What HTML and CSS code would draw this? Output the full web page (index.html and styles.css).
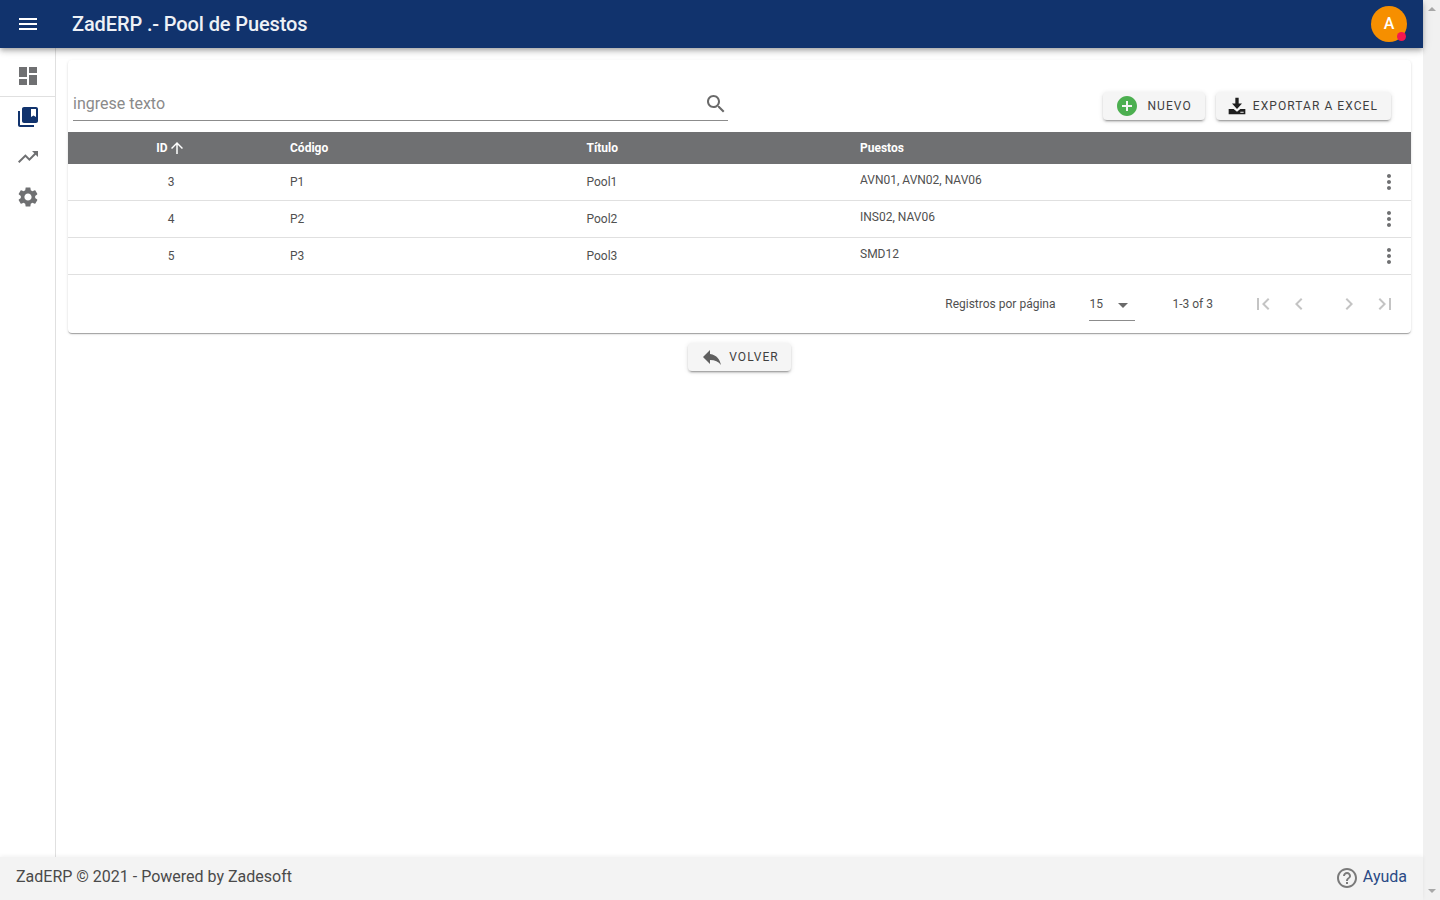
FILE: index.html
```html
<!DOCTYPE html>
<html lang="es">
<head>
    <meta charset="UTF-8">
    <meta name="viewport" content="width=device-width, initial-scale=1.0">
    <title>ZadERP .- Pool de Puestos</title>
    <link rel="stylesheet" href="styles.css">
</head>
<body>
    <div class="page">
        <header class="topbar">
            <button class="menu-btn">
                <svg class="icon" viewBox="0 0 24 24"><path d="M3 18h18v-2H3v2zm0-5h18v-2H3v2zm0-7v2h18V6H3z"/></svg>
            </button>
            <div class="app-title">ZadERP .- Pool de Puestos</div>
            <div class="avatar">A<span class="avatar-dot"></span></div>
        </header>

        <div class="middle">
            <nav class="sidebar">
                <div class="nav-item nav-first">
                    <svg class="icon" viewBox="0 0 24 24"><path d="M3 13h8V3H3v10zm0 8h8v-6H3v6zm10 0h8V11h-8v10zm0-18v6h8V3h-8z"/></svg>
                </div>
                <div class="nav-item active">
                    <svg class="icon" viewBox="0 0 24 24"><path d="M4 6H2v14c0 1.1.9 2 2 2h14v-2H4V6zm16-4H8c-1.1 0-2 .9-2 2v12c0 1.1.9 2 2 2h12c1.1 0 2-.9 2-2V4c0-1.1-.9-2-2-2zm0 10l-2.5-1.5L15 12V4h5v8z"/></svg>
                </div>
                <div class="nav-item">
                    <svg class="icon" viewBox="0 0 24 24"><path d="M16 6l2.29 2.29-4.88 4.88-4-4L2 16.59 3.41 18l6-6 4 4 6.3-6.29L22 12V6z"/></svg>
                </div>
                <div class="nav-item">
                    <svg class="icon" viewBox="0 0 24 24"><path d="M19.14 12.94c.04-.3.06-.61.06-.94 0-.32-.02-.64-.07-.94l2.03-1.58c.18-.14.23-.41.12-.61l-1.92-3.32c-.12-.22-.37-.29-.59-.22l-2.39.96c-.5-.38-1.03-.7-1.62-.94l-.36-2.54c-.04-.24-.24-.41-.48-.41h-3.84c-.24 0-.43.17-.47.41l-.36 2.54c-.59.24-1.13.57-1.62.94l-2.39-.96c-.22-.08-.47 0-.59.22L2.74 8.87c-.12.21-.08.47.12.61l2.03 1.58c-.05.3-.09.63-.09.94s.02.64.07.94l-2.03 1.58c-.18.14-.23.41-.12.61l1.92 3.32c.12.22.37.29.59.22l2.39-.96c.5.38 1.03.7 1.62.94l.36 2.54c.05.24.24.41.48.41h3.84c.24 0 .44-.17.47-.41l.36-2.54c.59-.24 1.13-.56 1.62-.94l2.39.96c.22.08.47 0 .59-.22l1.92-3.32c.12-.22.07-.47-.12-.61l-2.01-1.58zM12 15.6c-1.98 0-3.6-1.62-3.6-3.6s1.62-3.6 3.6-3.6 3.6 1.62 3.6 3.6-1.62 3.6-3.6 3.6z"/></svg>
                </div>
            </nav>

            <main class="content">
                <section class="card">
                    <div class="toolbar">
                        <div class="search">
                            <span class="search-text">ingrese texto</span>
                            <svg class="icon search-icon" viewBox="0 0 24 24"><path d="M15.5 14h-.79l-.28-.27C15.41 12.59 16 11.11 16 9.5 16 5.91 13.09 3 9.5 3S3 5.91 3 9.5 5.91 16 9.5 16c1.61 0 3.09-.59 4.23-1.57l.27.28v.79l5 4.99L20.49 19l-4.99-5zm-6 0C7.01 14 5 11.99 5 9.5S7.01 5 9.5 5 14 7.01 14 9.5 11.99 14 9.5 14z"/></svg>
                        </div>
                        <div class="actions">
                            <button class="btn btn-new">
                                <svg class="icon icon-add" viewBox="0 0 24 24"><path d="M12 2C6.48 2 2 6.48 2 12s4.48 10 10 10 10-4.48 10-10S17.52 2 12 2zm5 11h-4v4h-2v-4H7v-2h4V7h2v4h4v2z"/></svg>
                                NUEVO
                            </button>
                            <button class="btn btn-export">
                                <svg class="icon icon-download" viewBox="0 0 24 24"><path d="M10 2h4v7h4l-6 6.5L6 9h4zM2 15.5h6l4 3.5 4-3.5h6V22H2zM16 19v1h4v-1z" fill-rule="evenodd"/></svg>
                                EXPORTAR A EXCEL
                            </button>
                        </div>
                    </div>

                    <table class="grid">
                        <colgroup>
                            <col class="col-id">
                            <col class="col-code">
                            <col class="col-title">
                            <col class="col-posts">
                            <col class="col-menu">
                        </colgroup>
                        <thead>
                            <tr>
                                <th class="cell-id">ID<svg class="icon sort-icon" viewBox="0 0 24 24"><path d="M4 12l1.41 1.41L11 7.83V20h2V7.83l5.58 5.59L20 12l-8-8-8 8z"/></svg></th>
                                <th>Código</th>
                                <th>Título</th>
                                <th>Puestos</th>
                                <th></th>
                            </tr>
                        </thead>
                        <tbody>
                            <tr>
                                <td class="cell-id">3</td>
                                <td>P1</td>
                                <td>Pool1</td>
                                <td class="cell-posts">AVN01, AVN02, NAV06</td>
                                <td class="cell-menu"><svg class="icon" viewBox="0 0 24 24"><path d="M12 8c1.1 0 2-.9 2-2s-.9-2-2-2-2 .9-2 2 .9 2 2 2zm0 2c-1.1 0-2 .9-2 2s.9 2 2 2 2-.9 2-2-.9-2-2-2zm0 6c-1.1 0-2 .9-2 2s.9 2 2 2 2-.9 2-2-.9-2-2-2z"/></svg></td>
                            </tr>
                            <tr>
                                <td class="cell-id">4</td>
                                <td>P2</td>
                                <td>Pool2</td>
                                <td class="cell-posts">INS02, NAV06</td>
                                <td class="cell-menu"><svg class="icon" viewBox="0 0 24 24"><path d="M12 8c1.1 0 2-.9 2-2s-.9-2-2-2-2 .9-2 2 .9 2 2 2zm0 2c-1.1 0-2 .9-2 2s.9 2 2 2 2-.9 2-2-.9-2-2-2zm0 6c-1.1 0-2 .9-2 2s.9 2 2 2 2-.9 2-2-.9-2-2-2z"/></svg></td>
                            </tr>
                            <tr>
                                <td class="cell-id">5</td>
                                <td>P3</td>
                                <td>Pool3</td>
                                <td class="cell-posts">SMD12</td>
                                <td class="cell-menu"><svg class="icon" viewBox="0 0 24 24"><path d="M12 8c1.1 0 2-.9 2-2s-.9-2-2-2-2 .9-2 2 .9 2 2 2zm0 2c-1.1 0-2 .9-2 2s.9 2 2 2 2-.9 2-2-.9-2-2-2zm0 6c-1.1 0-2 .9-2 2s.9 2 2 2 2-.9 2-2-.9-2-2-2z"/></svg></td>
                            </tr>
                        </tbody>
                    </table>

                    <div class="pager">
                        <span class="pager-label">Registros por página</span>
                        <div class="pager-select"><span>15</span><i class="caret"></i></div>
                        <span class="pager-count">1-3 of 3</span>
                        <div class="pager-nav">
                            <svg class="icon" viewBox="0 0 24 24"><path d="M18.41 16.59L13.82 12l4.59-4.59L17 6l-6 6 6 6zM6 6h2v12H6z"/></svg>
                            <svg class="icon" viewBox="0 0 24 24"><path d="M15.41 7.41L14 6l-6 6 6 6 1.41-1.41L10.83 12z"/></svg>
                            <svg class="icon nav-next" viewBox="0 0 24 24"><path d="M10 6L8.59 7.41 13.17 12l-4.58 4.59L10 18l6-6z"/></svg>
                            <svg class="icon" viewBox="0 0 24 24"><path d="M5.59 7.41L10.18 12l-4.59 4.59L7 18l6-6-6-6zM16 6h2v12h-2z"/></svg>
                        </div>
                    </div>
                </section>

                <div class="back-row">
                    <button class="btn btn-back">
                        <svg class="icon" viewBox="0 0 24 24"><path d="M10 9V5l-7 7 7 7v-4.1c5 0 8.5 1.6 11 5.1-1-5-4-10-11-11z"/></svg>
                        VOLVER
                    </button>
                </div>
            </main>
        </div>

        <footer class="footer">
            <span>ZadERP © 2021 - Powered by Zadesoft</span>
            <a class="help" href="#">
                <svg class="icon" viewBox="0 0 24 24"><path d="M11 18h2v-2h-2v2zm1-16C6.48 2 2 6.48 2 12s4.48 10 10 10 10-4.48 10-10S17.52 2 12 2zm0 18c-4.41 0-8-3.59-8-8s3.59-8 8-8 8 3.59 8 8-3.59 8-8 8zm0-14c-2.21 0-4 1.79-4 4h2c0-1.1.9-2 2-2s2 .9 2 2c0 2-3 1.75-3 5h2c0-2.25 3-2.5 3-5 0-2.21-1.79-4-4-4z"/></svg>
                Ayuda
            </a>
        </footer>
    </div>

    <div class="scrollbar">
        <i class="arrow-up"></i>
        <i class="arrow-down"></i>
    </div>
</body>
</html>
```

FILE: styles.css
```css
:root {
    --primary-color: #11336d;
    --icon-color: #6f7072;
    --line-color: #e0e0e0;
    --text-color: #505050;
}

html, body {
    height: 100%;
}

body {
    margin: 0;
    display: flex;
    overflow: hidden;
    background-color: #fff;
    color: var(--text-color);
    font-family: Roboto, Arial, sans-serif;
}

.icon {
    display: block;
    width: 24px;
    height: 24px;
    fill: currentColor;
}

button {
    font-family: inherit;
}

.page {
    flex: 1;
    min-width: 0;
    display: flex;
    flex-direction: column;
}

/* barra superior */
.topbar {
    position: relative;
    z-index: 2;
    flex: 0 0 48px;
    display: flex;
    align-items: center;
    padding: 0 16px;
    background-color: var(--primary-color);
    color: #fff;
    box-shadow: 0 2px 4px -1px rgba(0,0,0,0.2), 0 4px 5px 0 rgba(0,0,0,0.14), 0 1px 10px 0 rgba(0,0,0,0.12);
}

.menu-btn {
    padding: 0;
    border: 0;
    background: none;
    color: #fff;
}

.app-title {
    flex: 1;
    margin-left: 32px;
    font-size: 20px;
    font-weight: 500;
    letter-spacing: -0.12px;
    color: #eef1f6;
}

.avatar {
    position: relative;
    width: 36px;
    height: 36px;
    border-radius: 50%;
    background-color: #f68f00;
    font-size: 16px;
    font-weight: 500;
    line-height: 36px;
    text-align: center;
}

.avatar-dot {
    position: absolute;
    right: 1px;
    bottom: 1px;
    width: 9px;
    height: 9px;
    border-radius: 50%;
    background-color: #f5174e;
}

/* menu lateral */
.middle {
    flex: 1;
    min-height: 0;
    display: flex;
}

.sidebar {
    flex: 0 0 55px;
    border-right: 1px solid var(--line-color);
    color: var(--icon-color);
}

.nav-item {
    height: 40px;
    display: flex;
    align-items: center;
    justify-content: center;
}

.nav-item .icon {
    margin-left: 1px;
}

.nav-first {
    height: 49px;
    border-bottom: 1px solid var(--line-color);
    box-sizing: border-box;
    padding-top: 8px;
}

.active {
    color: var(--primary-color);
}

/* contenido */
.content {
    flex: 1;
    min-width: 0;
    padding: 12px 12px 0;
}

.card {
    border-radius: 4px;
    background-color: #fff;
    box-shadow: 0 2px 1px -1px rgba(0,0,0,0.2), 0 1px 1px 0 rgba(0,0,0,0.14), 0 1px 3px 0 rgba(0,0,0,0.12);
}

.toolbar {
    height: 72px;
    display: flex;
    justify-content: space-between;
    align-items: flex-end;
    box-sizing: border-box;
    padding: 0 20px 11px 5px;
}

.search {
    width: 655px;
    height: 33px;
    box-sizing: border-box;
    display: flex;
    align-items: center;
    justify-content: space-between;
    border-bottom: 1px solid #8c8c8c;
    padding-right: 0.5px;
}

.search-text {
    margin-bottom: 2px;
    font-size: 16px;
    color: #8a8a8a;
}

.search-icon {
    width: 24px;
    height: 24px;
    color: #6a6a6a;
}

.actions {
    display: flex;
    gap: 11px;
    margin-bottom: 1px;
}

.btn {
    height: 28px;
    display: flex;
    align-items: center;
    border: 0;
    border-radius: 4px;
    padding: 0 13px;
    background-color: #f5f5f5;
    color: #3f3f3f;
    font-size: 12px;
    font-weight: 400;
    letter-spacing: 1.07px;
    box-shadow: 0 3px 1px -2px rgba(0,0,0,0.2), 0 2px 2px 0 rgba(0,0,0,0.14), 0 1px 5px 0 rgba(0,0,0,0.12);
}

.btn .icon {
    width: 24px;
    height: 24px;
    margin-right: 8px;
}

.btn-new {
    padding: 0 13px 0 12px;
}

.btn-new .icon-add {
    color: #4caf50;
}

.btn-export {
    padding-left: 11px;
}

.btn-export .icon-download {
    width: 20px;
    height: 20px;
    margin-right: 6px;
    color: #1f1f1f;
}

/* tabla */
.grid {
    width: 100%;
    border-collapse: separate;
    border-spacing: 0;
    table-layout: fixed;
    font-size: 12px;
}

.col-id { width: 206px; }
.col-code { width: 296.5px; }
.col-title { width: 273.5px; }
.col-menu { width: 44px; }

.grid th {
    height: 32px;
    padding: 0 0 0 16px;
    background-color: #6f7072;
    color: #fff;
    font-weight: 700;
    text-align: left;
}

.grid td {
    height: 37px;
    box-sizing: border-box;
    padding: 0 0 0 16px;
    border-bottom: 1px solid var(--line-color);
    color: var(--text-color);
}

.grid .cell-id {
    padding: 0;
    text-align: center;
}

th.cell-id {
    white-space: nowrap;
}

.sort-icon {
    display: inline-block;
    width: 18px;
    height: 18px;
    vertical-align: -5px;
}

.grid .cell-posts {
    padding-bottom: 4px;
}

.grid .cell-menu {
    padding: 0;
    color: var(--icon-color);
}

.cell-menu .icon {
    margin: 0 auto;
}

/* paginador */
.pager {
    height: 58px;
    display: flex;
    align-items: center;
    justify-content: flex-end;
    padding-right: 14px;
    font-size: 12px;
}

.pager-select {
    width: 46px;
    height: 32px;
    margin: 2px 37px 0 34px;
    box-sizing: border-box;
    display: flex;
    align-items: center;
    justify-content: space-between;
    border-bottom: 1px solid #8c8c8c;
    padding: 0 7px 1px 0;
}

.caret {
    width: 0;
    height: 0;
    margin-top: 2px;
    border-left: 5px solid transparent;
    border-right: 5px solid transparent;
    border-top: 5px solid #6a6a6a;
}

.pager-nav {
    display: flex;
    margin-left: 38px;
    color: #c4c4c4;
    gap: 12px;
}

.pager-nav .nav-next {
    margin-left: 14px;
}

.back-row {
    display: flex;
    justify-content: center;
    margin-top: 10px;
}

.btn-back {
    padding: 0 12px;
}

.btn-back .icon {
    margin-right: 5px;
    color: #5f5f5f;
}

/* pie */
.footer {
    position: relative;
    flex: 0 0 43px;
    display: flex;
    align-items: center;
    justify-content: space-between;
    box-sizing: border-box;
    padding: 0 16px 4px;
    background-color: #f3f3f3;
    color: #4a4a4a;
    font-size: 16px;
    box-shadow: 0 -1px 4px rgba(0,0,0,0.06);
}

.help {
    display: flex;
    align-items: center;
    gap: 4px;
    color: #2a4a85;
    text-decoration: none;
}

.help .icon {
    margin-top: 2px;
    color: #7a7a7a;
}

/* barra de desplazamiento */
.scrollbar {
    flex: 0 0 17px;
    display: flex;
    flex-direction: column;
    justify-content: space-between;
    align-items: center;
    padding: 7px 0;
    box-sizing: border-box;
    background-color: #f1f1f1;
}

.arrow-up,
.arrow-down {
    width: 0;
    height: 0;
    border-left: 4px solid transparent;
    border-right: 4px solid transparent;
}

.arrow-up {
    border-bottom: 4px solid #a8a8a8;
}

.arrow-down {
    border-top: 4px solid #a8a8a8;
}
```
